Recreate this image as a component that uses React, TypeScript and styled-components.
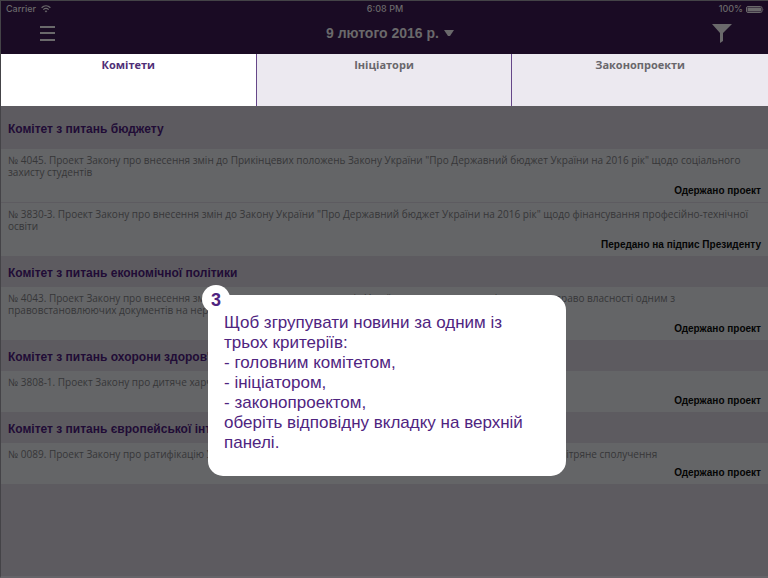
import React, { useState } from "react";
import styled, { createGlobalStyle } from "styled-components";

const GlobalStyle = createGlobalStyle`
  * { box-sizing: border-box; }
  body {
    margin: 0;
    background: #5d5b60;
    font-family: "Liberation Sans", Arial, sans-serif;
  }
  button { font: inherit; color: inherit; border: 0; margin: 0; padding: 0; background: none; cursor: pointer; }
  h1, h2, p, ul { margin: 0; padding: 0; }
  ul { list-style: none; }
`;

const Screen = styled.div`
  position: relative;
  min-height: 100vh;
  border: 1px solid #444347;
  border-right: 0;
  border-bottom: 2px solid #656469;
  background: #5d5b60;
`;

const Header = styled.header`
  background: #1a0b24;
  color: #6a696b;
`;

const StatusBar = styled.div`
  display: grid;
  grid-template-columns: 1fr auto 1fr;
  align-items: center;
  height: 16px;
  padding: 0 4px 0 5px;
  font-size: 9px;
  line-height: 16px;
  font-family: Inter, "Liberation Sans", sans-serif;
  font-weight: 500;
`;

const StatusGroup = styled.div<{ $end?: boolean }>`
  display: flex;
  align-items: center;
  justify-content: ${(p) => (p.$end ? "flex-end" : "flex-start")};
  gap: ${(p) => (p.$end ? 3 : 5)}px;
`;

const NavBar = styled.div`
  display: grid;
  grid-template-columns: 1fr auto 1fr;
  align-items: center;
  height: 37px;
  padding: 0 36px 5px 39px;
`;

const IconButton = styled.button<{ $end?: boolean }>`
  display: flex;
  justify-self: ${(p) => (p.$end ? "end" : "start")};
`;

const DateButton = styled.button`
  display: flex;
  align-items: center;
  gap: 5px;
  padding-left: 8px;
  font-size: 14px;
  line-height: 20px;
  font-weight: 700;
`;

const Tabs = styled.div`
  display: grid;
  grid-template-columns: repeat(3, 1fr);
  height: 52px;
`;

const Tab = styled.button<{ $active: boolean }>`
  display: flex;
  justify-content: center;
  padding-top: 4px;
  font-size: 11px;
  line-height: 14px;
  font-weight: 700;
  font-family: "Open Sans", "Liberation Sans", sans-serif;
  color: ${(p) => (p.$active ? "#4f2e77" : "#69676c")};
  background: ${(p) => (p.$active ? "#ffffff" : "#ece9f0")};
  &:not(:last-child) { border-right: 1px solid #664789; }
`;

const Section = styled.section`
  &:first-child > h2 { padding: 15px 7px 12px; }
`;

const SectionTitle = styled.h2`
  padding: 8px 7px 6px;
  font-size: 12px;
  line-height: 16px;
  font-weight: 700;
  color: #210c36;
`;

const Row = styled.li`
  display: flex;
  flex-direction: column;
  gap: 7px;
  padding: 5px 7px;
  border-bottom: 1px solid #5d5b60;
  background: #646567;
  line-height: 12px;
`;

const Bill = styled.p`
  font-family: "Open Sans", "Liberation Sans", sans-serif;
  font-size: 10px;
  color: #363638;
  white-space: pre-line;
`;

const State = styled.p`
  font-size: 10px;
  font-weight: 700;
  text-align: right;
  color: #050505;
`;

const Hint = styled.div`
  position: absolute;
  top: 294px;
  left: 207px;
  width: 358px;
  padding: 18px 16px 23px;
  border-radius: 15px;
  background: #ffffff;
  color: #4f2480;
  font-size: 17px;
  line-height: 20px;
  white-space: pre-line;
`;

const Badge = styled.span`
  position: absolute;
  top: -10px;
  left: -6px;
  width: 28px;
  height: 28px;
  border-radius: 50%;
  background: #ffffff;
  font-size: 18px;
  line-height: 30px;
  font-weight: 700;
  text-align: center;
`;

const received = "Одержано проект";

const sections = [
  {
    title: "Комітет з питань бюджету",
    rows: [
      {
        text: '№ 4045. Проект Закону про внесення змін до Прикінцевих положень Закону України "Про Державний бюджет України на 2016 рік" щодо соціального\nзахисту студентів',
        state: received,
      },
      {
        text: '№ 3830-3. Проект Закону про внесення змін до Закону України "Про Державний бюджет України на 2016 рік" щодо фінансування професійно-технічної\nосвіти',
        state: "Передано на підпис Президенту",
      },
    ],
  },
  {
    title: "Комітет з питань економічної політики",
    rows: [
      {
        text: "№ 4043. Проект Закону про внесення змін до деяких законодавчих актів України щодо визнання свідоцтва про право власності одним з\nправовстановлюючих документів на нерухоме майно",
        state: received,
      },
    ],
  },
  {
    title: "Комітет з питань охорони здоров'я",
    rows: [{ text: "№ 3808-1. Проект Закону про дитяче харчування", state: received }],
  },
  {
    title: "Комітет з питань європейської інтеграції",
    rows: [
      {
        text: "№ 0089. Проект Закону про ратифікацію Угоди між Кабінетом Міністрів України та Урядом Держави Катар про повітряне сполучення",
        state: received,
      },
    ],
  },
];

const tabs = ["Комітети", "Ініціатори", "Законопроекти"];

export default function App() {
  const [active, setActive] = useState(0);
  return (
    <>
      <GlobalStyle />
      <Screen>
        <Header>
          <StatusBar>
            <StatusGroup>
              <span>Carrier</span>
              <svg width="10" height="8" viewBox="0 0 10 8" fill="none" stroke="currentColor" strokeWidth="1.2" aria-hidden="true">
                <path d="M0.6 2.8C3.2 0.3 6.8 0.3 9.4 2.8M2.3 4.6C4 3.1 6 3.1 7.7 4.6" />
                <path d="M3.6 6L5 7.5L6.4 6C5.6 5.3 4.4 5.3 3.6 6Z" fill="currentColor" stroke="none" />
              </svg>
            </StatusGroup>
            <span>6:08 PM</span>
            <StatusGroup $end>
              <span>100%</span>
              <svg width="18" height="7" viewBox="0 0 18 7" aria-hidden="true">
                <rect x="0.5" y="0.5" width="15.5" height="6" rx="1.5" fill="none" stroke="currentColor" />
                <rect x="1.5" y="1.5" width="13.5" height="4" rx="0.5" fill="currentColor" />
                <path d="M16.8 2.2Q18 3.5 16.8 4.8Z" fill="currentColor" />
              </svg>
            </StatusGroup>
          </StatusBar>
          <NavBar>
            <IconButton aria-label="Меню">
              <svg width="15" height="16" viewBox="0 0 15 16" fill="currentColor" aria-hidden="true">
                <path d="M0 1H15V3H0ZM0 7H15V9H0ZM0 14H15V16H0Z" />
              </svg>
            </IconButton>
            <DateButton>
              <span>9 лютого 2016 р.</span>
              <svg width="10" height="6" viewBox="0 0 10 6" fill="currentColor" aria-hidden="true">
                <path d="M0 0H10L6 6H4Z" />
              </svg>
            </DateButton>
            <IconButton $end aria-label="Фільтр">
              <svg width="20" height="19" viewBox="0 0 20 19" fill="currentColor" aria-hidden="true">
                <path d="M0 0H20L11 9V17L8 19V9Z" />
              </svg>
            </IconButton>
          </NavBar>
        </Header>
        <Tabs role="tablist">
          {tabs.map((label, i) => (
            <Tab key={label} role="tab" aria-selected={i === active} $active={i === active} onClick={() => setActive(i)}>
              {label}
            </Tab>
          ))}
        </Tabs>
        <main>
          {sections.map((section) => (
            <Section key={section.title}>
              <SectionTitle>{section.title}</SectionTitle>
              <ul>
                {section.rows.map((row) => (
                  <Row key={row.text}>
                    <Bill>{row.text}</Bill>
                    <State>{row.state}</State>
                  </Row>
                ))}
              </ul>
            </Section>
          ))}
        </main>
        <Hint role="dialog" aria-label="Підказка 3">
          <Badge>3</Badge>
          <p>
            {"Щоб згрупувати новини за одним із\nтрьох критеріїв:\n- головним комітетом,\n- ініціатором,\n- законопроектом,\nоберіть відповідну вкладку на верхній\nпанелі."}
          </p>
        </Hint>
      </Screen>
    </>
  );
}
